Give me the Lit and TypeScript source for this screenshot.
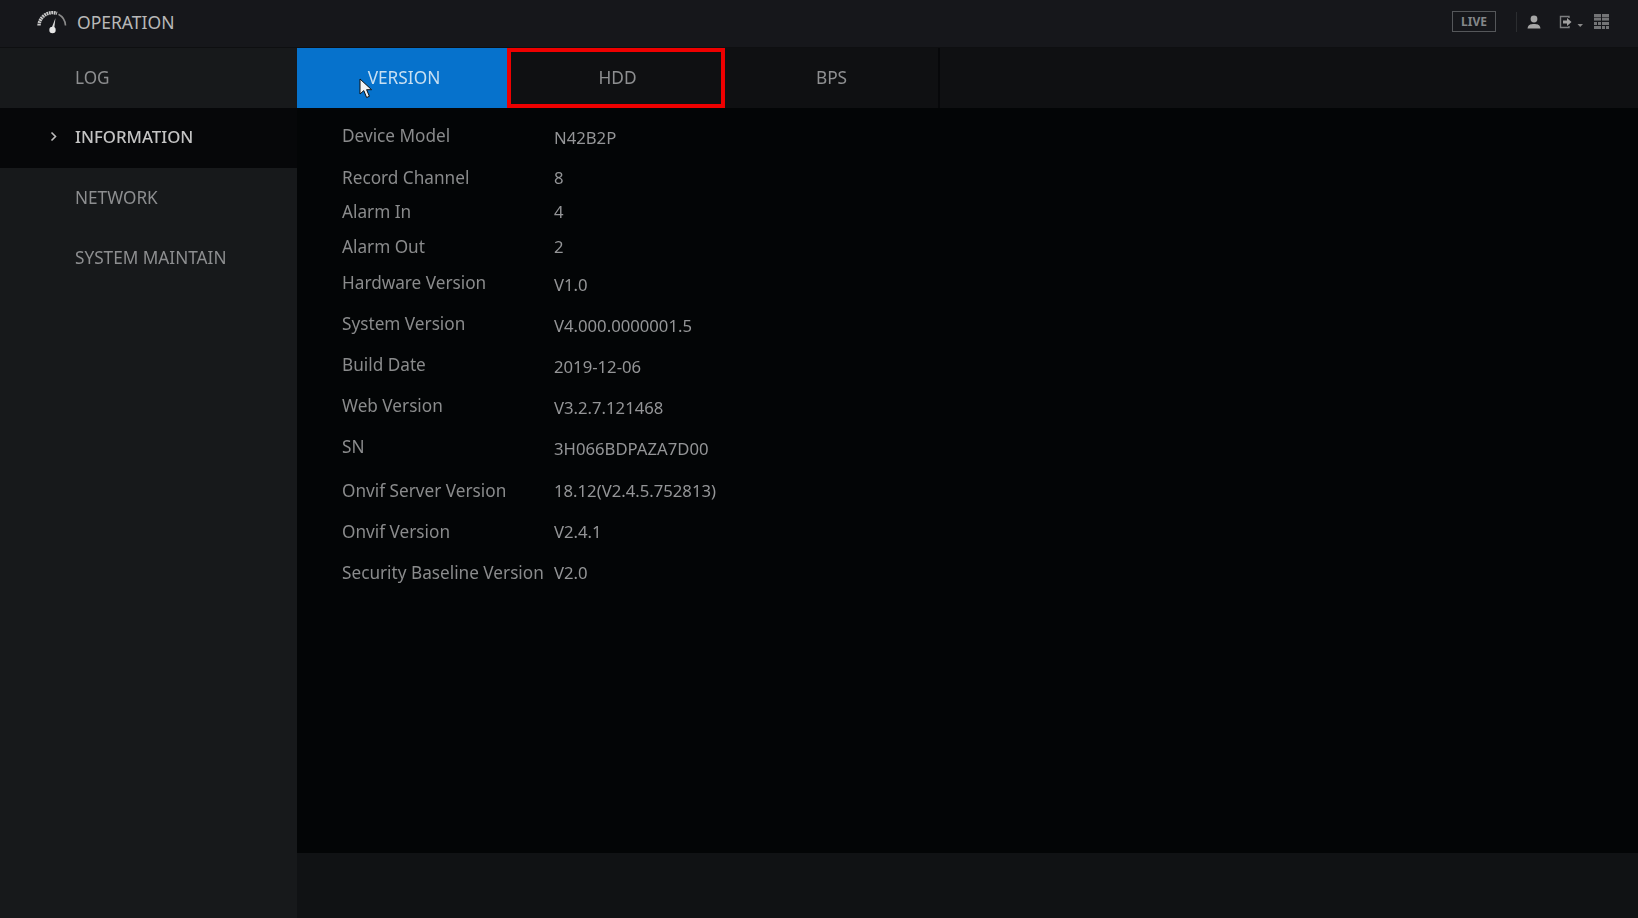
import { LitElement, html, css } from 'lit';
import { customElement } from 'lit/decorators.js';

const rows = [
  { label: 'Device Model', value: 'N42B2P', height: 42, low: true },
  { label: 'Record Channel', value: '8', height: 34 },
  { label: 'Alarm In', value: '4', height: 35 },
  { label: 'Alarm Out', value: '2', height: 36 },
  { label: 'Hardware Version', value: 'V1.0', height: 41, low: true },
  { label: 'System Version', value: 'V4.000.0000001.5', height: 41, low: true },
  { label: 'Build Date', value: '2019-12-06', height: 41, low: true },
  { label: 'Web Version', value: 'V3.2.7.121468', height: 41, low: true },
  { label: 'SN', value: '3H066BDPAZA7D00', height: 44, low: true },
  { label: 'Onvif Server Version', value: '18.12(V2.4.5.752813)', height: 41 },
  { label: 'Onvif Version', value: 'V2.4.1', height: 41 },
  { label: 'Security Baseline Version', value: 'V2.0', height: 41 },
];

@customElement('app-root')
export class AppRoot extends LitElement {
  static styles = css`
    :host {
      display: block;
      width: 1638px;
      height: 918px;
      overflow: hidden;
      position: relative;
      background: #141518;
      color: #a3a3a3;
      font-family: 'Noto Sans', 'Open Sans', sans-serif;
      font-size: 17.2px;
    }

    .page { filter: blur(0.35px); }

    .header {
      height: 48px;
      display: flex;
      align-items: center;
      padding: 0 29px 4px 36px;
      box-sizing: border-box;
      background: #16171b;
      border-bottom: 1px solid #0e0f11;
    }
    .gauge { width: 31px; height: 24px; margin-right: 10px; }
    .title { color: #b8b8b8; font-size: 17.5px; }
    .tools { margin-left: auto; display: flex; align-items: center; }
    .live {
      width: 42px;
      height: 19px;
      border: 1px solid #55575a;
      color: #85878a;
      font-size: 12px;
      font-weight: 700;
      display: flex;
      align-items: center;
      justify-content: center;
    }
    .sep { width: 1px; height: 20px; background: #2b2d30; margin: 0 10px 0 20px; }
    .tools svg { display: block; }
    .user { margin: 0 18px 0 0; }
    .exit { margin-right: 11px; }

    .body { display: flex; height: 870px; }
    .side { width: 297px; flex: none; background: #17191b; }
    .item {
      height: 60px;
      padding: 0 0 1px 75px;
      box-sizing: border-box;
      display: flex;
      align-items: center;
      position: relative;
      color: #8d8e90;
      font-size: 17.2px;
    }
    .item.active {
      padding-bottom: 3px;
      background: #060709;
      color: #c4c4c4;
      font-size: 16.8px;
      font-weight: 500;
    }
    .chev { position: absolute; left: 50px; top: 23px; }

    .content { flex: 1; display: flex; flex-direction: column; }
    .tabs { height: 60px; flex: none; display: flex; background: #0f1012; }
    .tab {
      width: 215px;
      padding-bottom: 2px;
      display: flex;
      align-items: center;
      justify-content: center;
      color: #8e8f91;
      box-sizing: border-box;
      font-size: 17.3px;
    }
    .tab.on { width: 210px; padding-left: 4px; background: #0672cc; color: #c7dff2; }
    .tab.marked { width: 218px; padding-left: 3px; border: 4px solid #ee0000; }
    .tab.last { border-right: 2px solid #07080a; }

    .panel {
      height: 745px;
      flex: none;
      padding: 16px 0 0 45px;
      box-sizing: border-box;
      background: #030506;
    }
    .row { display: flex; }
    .label { width: 211px; color: #8a8b8c; flex: none; white-space: nowrap; }
    .value { color: #949597; font-size: 16.7px; padding-left: 1px; }
    .row.low .value { padding-top: 2px; }
    .foot { flex: 1; background: #101214; }

    .cursor { position: absolute; left: 359px; top: 78px; width: 15px; height: 21px; }
  `;

  render() {
    return html`
      <div class="page">
        <div class="header">
          <svg class="gauge" viewBox="0 0 31 24" fill="none">
            <path d="M3 15.5 A13.5 13.5 0 0 1 21 3.4" stroke="#c8c8c8" stroke-width="3.4" stroke-dasharray="1.8 .6" />
            <path d="M22.5 4.2 A13.5 13.5 0 0 1 29.5 15.5" stroke="#8a8a8a" stroke-width="1.6" />
            <path d="M14.8 20 L19.5 8 L18 20 Z" fill="#d8d8d8" />
            <circle cx="16.5" cy="20" r="3.2" fill="#e6e6e6" />
          </svg>
          <span class="title">OPERATION</span>
          <div class="tools">
            <div class="live">LIVE</div>
            <div class="sep"></div>
            <svg class="user" width="14" height="14" viewBox="0 0 14 14">
              <circle cx="7" cy="4" r="3.4" fill="#a6a6a6" />
              <path d="M.5 13.5 C1 9.5 4 9 7 9 C10 9 13 9.5 13.5 13.5 Z" fill="#a6a6a6" />
            </svg>
            <svg class="exit" width="24" height="14" viewBox="0 0 24 14">
              <path d="M10 3V1.5H1.5V12.5H10V11" fill="none" stroke="#7d7e80" stroke-width="1.4" />
              <path d="M4 5.5H8V3L12.5 7L8 11V8.5H4Z" fill="#a0a0a0" />
              <path d="M18.5 9H24L21.2 12Z" fill="#8a8a8a" />
            </svg>
            <svg width="15" height="15" viewBox="0 0 15 15" fill="#737476">
              <rect x="0" y="0" width="7" height="3" /><rect x="8" y="0" width="7" height="3" />
              <rect x="0" y="3.6" width="7" height="3" /><rect x="8" y="3.6" width="7" height="3" />
              <rect x="0" y="8" width="3" height="3" /><rect x="4" y="8" width="3" height="3" />
              <rect x="8" y="8" width="7" height="3" />
              <rect x="0" y="12" width="7" height="3" /><rect x="8" y="12" width="3" height="3" />
              <rect x="12" y="12" width="3" height="3" />
            </svg>
          </div>
        </div>
        <div class="body">
          <div class="side">
            <div class="item">LOG</div>
            <div class="item active">
              <svg class="chev" width="7" height="11" viewBox="0 0 7 11" fill="none">
                <path d="M1.5 1.5L5.5 5.5L1.5 9.5" stroke="#bdbdbd" stroke-width="1.6" />
              </svg>
              INFORMATION
            </div>
            <div class="item">NETWORK</div>
            <div class="item">SYSTEM MAINTAIN</div>
          </div>
          <div class="content">
            <div class="tabs">
              <div class="tab on">VERSION</div>
              <div class="tab marked">HDD</div>
              <div class="tab last">BPS</div>
            </div>
            <div class="panel">
              ${rows.map(
                (r) => html`
                  <div class="row ${r.low ? 'low' : ''}" style="height:${r.height}px">
                    <span class="label">${r.label}</span>
                    <span class="value">${r.value}</span>
                  </div>
                `
              )}
            </div>
            <div class="foot"></div>
          </div>
        </div>
      </div>
      <svg class="cursor" viewBox="0 0 15 21">
        <path d="M1 1V16L4.8 12.6L7.6 19.5L10.4 18.3L7.6 11.7H12.6Z" fill="#f4f4f4" stroke="#111" stroke-width="1" />
      </svg>
    `;
  }
}
